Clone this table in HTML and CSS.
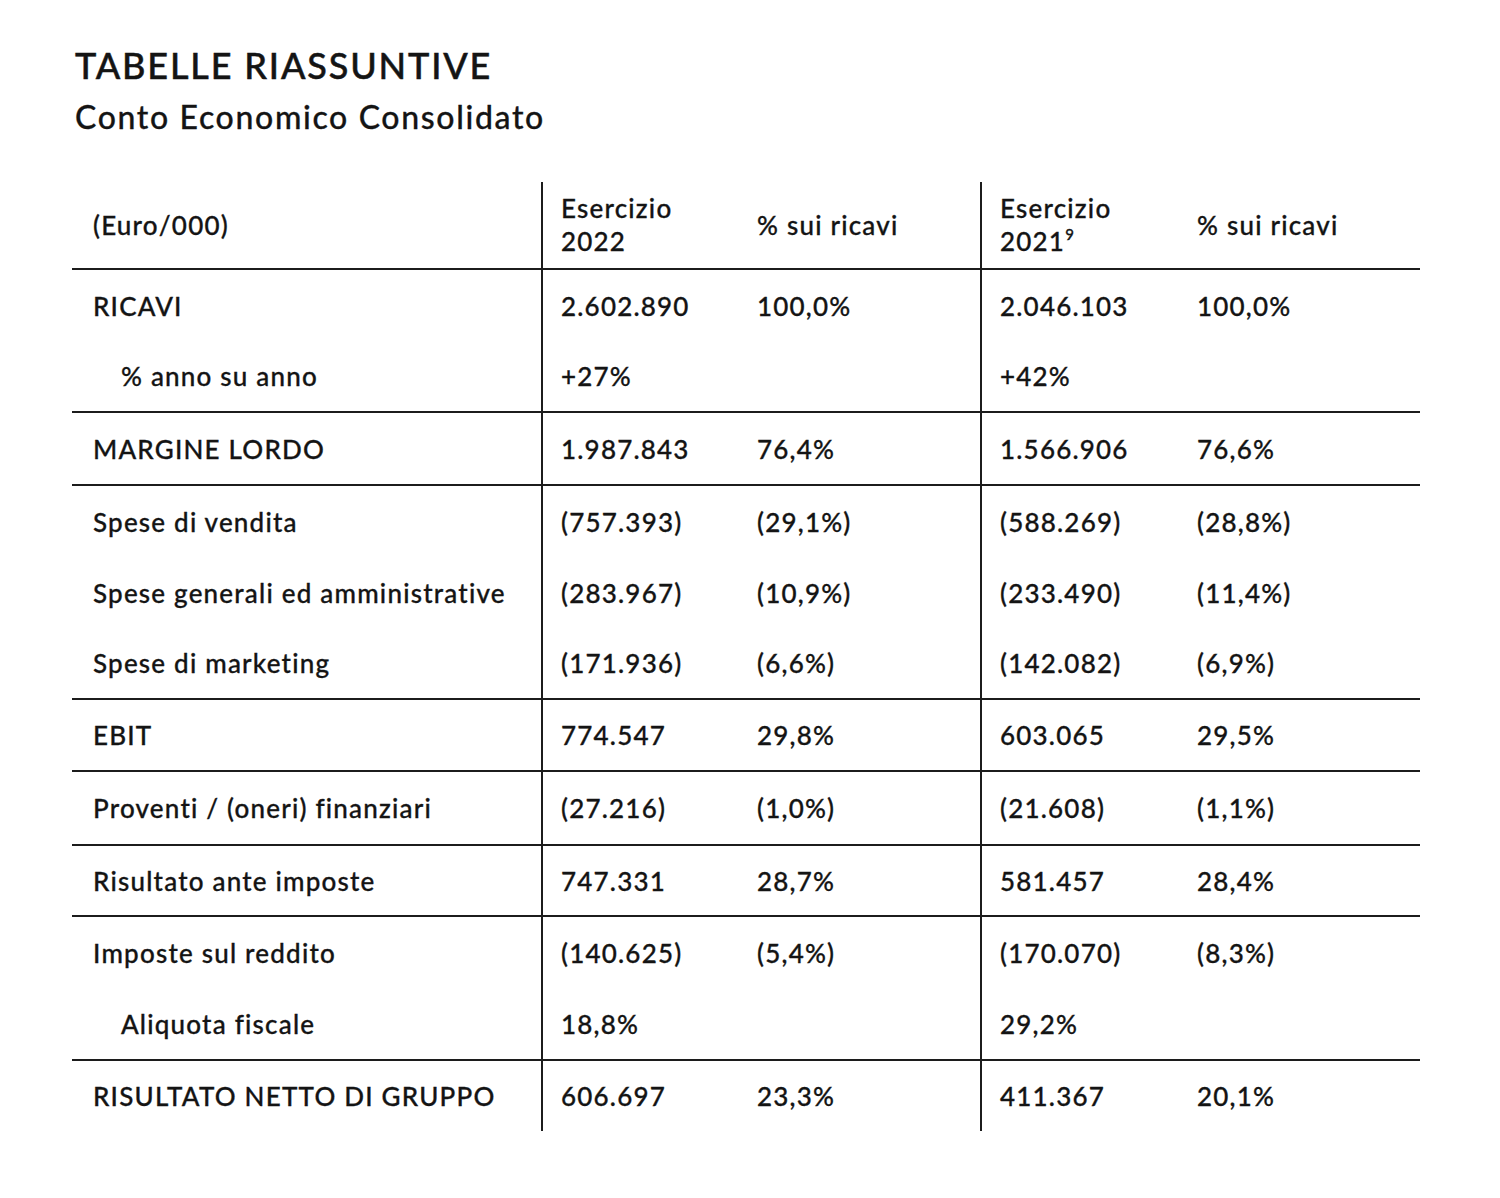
FILE: index.html
```html
<!DOCTYPE html>
<html lang="it">
<head>
<meta charset="utf-8">
<title>Tabelle riassuntive</title>
<link rel="stylesheet" href="styles.css">
</head>
<body>
<main class="page">
  <h1 class="title">TABELLE RIASSUNTIVE</h1>
  <h2 class="subtitle">Conto Economico Consolidato</h2>
  <div class="fin" role="table">
    <div class="row head end" role="row">
      <div class="cell">(Euro/000)</div>
      <div class="cell sep">Esercizio<br>2022</div>
      <div class="cell">% sui ricavi</div>
      <div class="cell sep">Esercizio<br>2021<sup>9</sup></div>
      <div class="cell">% sui ricavi</div>
    </div>

    <div class="row" role="row"><div class="cell">RICAVI</div><div class="cell sep">2.602.890</div><div class="cell">100,0%</div><div class="cell sep">2.046.103</div><div class="cell">100,0%</div></div>
    <div class="row end" role="row"><div class="cell ind">% anno su anno</div><div class="cell sep">+27%</div><div class="cell"></div><div class="cell sep">+42%</div><div class="cell"></div></div>

    <div class="row end r73" role="row"><div class="cell">MARGINE LORDO</div><div class="cell sep">1.987.843</div><div class="cell">76,4%</div><div class="cell sep">1.566.906</div><div class="cell">76,6%</div></div>

    <div class="row" role="row"><div class="cell">Spese di vendita</div><div class="cell sep">(757.393)</div><div class="cell">(29,1%)</div><div class="cell sep">(588.269)</div><div class="cell">(28,8%)</div></div>
    <div class="row" role="row"><div class="cell">Spese generali ed amministrative</div><div class="cell sep">(283.967)</div><div class="cell">(10,9%)</div><div class="cell sep">(233.490)</div><div class="cell">(11,4%)</div></div>
    <div class="row end" role="row"><div class="cell">Spese di marketing</div><div class="cell sep">(171.936)</div><div class="cell">(6,6%)</div><div class="cell sep">(142.082)</div><div class="cell">(6,9%)</div></div>

    <div class="row end" role="row"><div class="cell">EBIT</div><div class="cell sep">774.547</div><div class="cell">29,8%</div><div class="cell sep">603.065</div><div class="cell">29,5%</div></div>

    <div class="row end r74" role="row"><div class="cell">Proventi / (oneri) finanziari</div><div class="cell sep">(27.216)</div><div class="cell">(1,0%)</div><div class="cell sep">(21.608)</div><div class="cell">(1,1%)</div></div>

    <div class="row end r71" role="row"><div class="cell">Risultato ante imposte</div><div class="cell sep">747.331</div><div class="cell">28,7%</div><div class="cell sep">581.457</div><div class="cell">28,4%</div></div>

    <div class="row r72" role="row"><div class="cell">Imposte sul reddito</div><div class="cell sep">(140.625)</div><div class="cell">(5,4%)</div><div class="cell sep">(170.070)</div><div class="cell">(8,3%)</div></div>
    <div class="row end" role="row"><div class="cell ind">Aliquota fiscale</div><div class="cell sep">18,8%</div><div class="cell"></div><div class="cell sep">29,2%</div><div class="cell"></div></div>

    <div class="row last" role="row"><div class="cell">RISULTATO NETTO DI GRUPPO</div><div class="cell sep">606.697</div><div class="cell">23,3%</div><div class="cell sep">411.367</div><div class="cell">20,1%</div></div>
  </div>
</main>
</body>
</html>
```

FILE: styles.css
```css
html, body {
  margin: 0;
  padding: 0;
  background: #ffffff;
}

body {
  font-family: "Lato", "Open Sans", sans-serif;
  color: #141414;
}

*, *::before, *::after {
  box-sizing: border-box;
}

.page {
  padding: 40px 0 0 72px;
}

.title {
  margin: 0 0 0 3px;
  font-size: 36px;
  font-weight: 500;
  letter-spacing: 1.85px;
  line-height: 50px;
  -webkit-text-stroke: 0.5px #141414;
}

.subtitle {
  margin: 5px 0 0 3px;
  font-size: 32px;
  font-weight: 500;
  letter-spacing: 1.65px;
  line-height: 44px;
  -webkit-text-stroke: 0.3px #141414;
}

.fin {
  margin-top: 43px;
  width: 1348px;
  display: flex;
  flex-direction: column;
  font-size: 26px;
  font-weight: 500;
  letter-spacing: 1.2px;
  -webkit-text-stroke: 0.3px #141414;
}

.row {
  display: grid;
  grid-template-columns: 469px 196px 243px 197px 243px;
  height: 71px;
}

.row.end {
  height: 72px;
  border-bottom: 2px solid #1c1c1c;
}

.row.r73 { height: 73px; }
.row.r74 { height: 74px; }
.row.r71 { height: 71px; }
.row.r72 { height: 72px; }
.row.last { height: 70px; }

.row.head {
  height: 88px;
  line-height: 33px;
}

.row.head .cell {
  padding-top: 0;
}

.cell {
  display: flex;
  flex-direction: column;
  justify-content: center;
  padding-left: 20px;
  white-space: nowrap;
}

.cell:first-child {
  padding-left: 21px;
}

.cell.ind {
  padding-left: 49px;
}

.cell.sep {
  border-left: 2px solid #1c1c1c;
  padding-left: 18px;
}

.head .cell.sep {
  display: block;
  padding-top: 10px;
}

.head sup {
  font-size: 15px;
  line-height: 0;
  vertical-align: 11px;
}
```
